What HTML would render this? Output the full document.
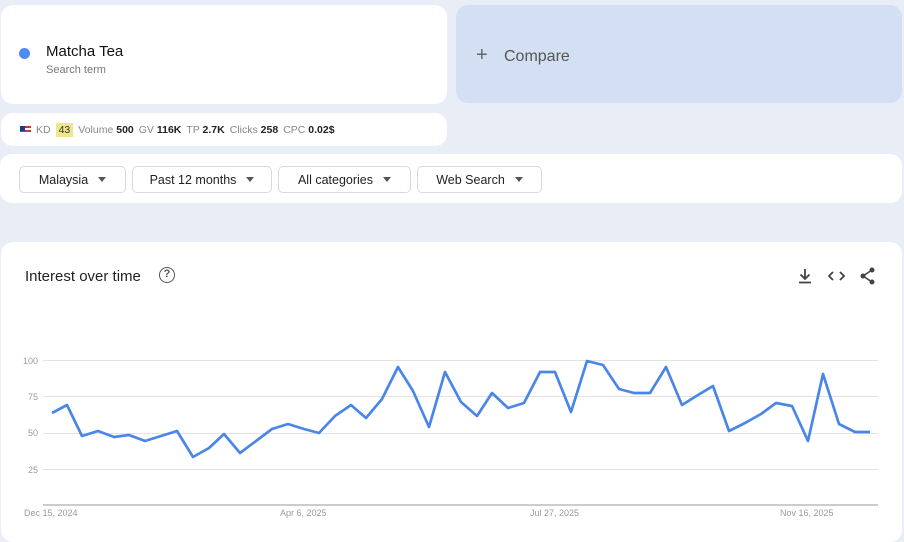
<!DOCTYPE html>
<html><head><meta charset="utf-8"><style>
*{box-sizing:border-box;margin:0;padding:0}
body{width:904px;height:528px;overflow:hidden;background:#e9eef6;font-family:"Liberation Sans",Arial,sans-serif;position:relative}
.card{position:absolute;background:#fff;border-radius:12px}
.dd{position:absolute;top:12px;height:27px;border:1px solid #d6d9de;border-radius:5px;font-size:12.5px;color:#222;display:flex;align-items:center;justify-content:center;gap:10px}
.tri{width:0;height:0;border-left:4.5px solid transparent;border-right:4.5px solid transparent;border-top:5px solid #555}
.m{font-size:10.5px;color:#888}.m b{color:#222}
.ax{position:absolute;font-size:9px;color:#9a9a9a}
</style></head><body>
<div class="card" style="left:1px;top:5px;width:446px;height:99px">
 <div style="position:absolute;left:18px;top:43px;width:11px;height:11px;border-radius:50%;background:#4e8cf1"></div>
 <div style="position:absolute;left:45px;top:38px;font-size:15px;color:#111">Matcha Tea</div>
 <div style="position:absolute;left:45px;top:59px;font-size:11px;color:#777">Search term</div>
</div>
<div style="position:absolute;left:456px;top:5px;width:446px;height:98px;background:#d3e0f3;border-radius:12px">
 <div style="position:absolute;left:20px;top:40px;font-size:20px;color:#666;line-height:20px;font-weight:300">+</div>
 <div style="position:absolute;left:48px;top:43px;font-size:16px;color:#555">Compare</div>
</div>
<div class="card" style="left:1px;top:113px;width:446px;height:33px">
 <div class="m" style="position:absolute;left:19px;top:10px;white-space:nowrap;display:flex;align-items:center;gap:5px">
 <span style="display:inline-block;width:11px;height:8px;background:linear-gradient(#c33 0 25%,#fff 25% 50%,#c33 50% 75%,#fff 75%);position:relative"><span style="position:absolute;left:0;top:0;width:5px;height:5px;background:#1a3a8c"></span></span>
 <span>KD</span><span style="background:#ede88a;color:#333;padding:1px 3px">43</span><span>Volume <b>500</b></span><span>GV <b>116K</b></span><span>TP <b>2.7K</b></span><span>Clicks <b>258</b></span><span>CPC <b>0.02$</b></span></div>
</div>
<div class="card" style="left:0;top:154px;width:902px;height:49px">
 <div class="dd" style="left:19px;width:107px">Malaysia<span class="tri"></span></div>
 <div class="dd" style="left:132px;width:140px">Past 12 months<span class="tri"></span></div>
 <div class="dd" style="left:278px;width:133px">All categories<span class="tri"></span></div>
 <div class="dd" style="left:417px;width:125px">Web Search<span class="tri"></span></div>
</div>
<div class="card" style="left:1px;top:242px;width:901px;height:300px">
 <div style="position:absolute;left:24px;top:26px;font-size:15px;color:#222">Interest over time</div>
 <div style="position:absolute;left:158px;top:25px;width:16px;height:16px;border:1.6px solid #555;border-radius:50%;font-size:11px;color:#555;text-align:center;line-height:13px;font-weight:bold">?</div>
</div>
<svg width="904" height="528" style="position:absolute;left:0;top:0">
 <g stroke="#444" stroke-width="1.8" fill="none">
  <path d="M805 269v10M800.5 274.5l4.5 4.5 4.5-4.5M799 282.5h12"/>
  <path d="M833 272l-4 4 4 4M840 272l4 4-4 4"/>
 </g>
 <g fill="#444"><circle cx="872" cy="270" r="2.5"/><circle cx="863" cy="276" r="2.5"/><circle cx="872" cy="282" r="2.5"/></g>
 <path d="M872 270l-9 6 9 6" stroke="#444" stroke-width="1.5" fill="none"/>
 <g stroke="#e3e3e3" stroke-width="1"><path d="M43 360.5H878M43 396.5H878M43 433.5H878M43 469.5H878"/></g>
 <path d="M43 505H878" stroke="#bbb" stroke-width="1.5"/>
 <polyline fill="none" stroke="#4a86e8" stroke-width="2.7" stroke-linejoin="round" points="52,413 67,405 82,436 98,431 114,437 129,435 145,441 161,436 177,431 193,457 209,448 224,434 240,453 256,441 272,429 288,424 304,429 319,433 335,416 351,405 366,418 382,399 398,367 413,391 429,427 445,372 461,402 477,416 492,393 508,408 524,403 540,372 555,372 571,412 587,361 603,365 619,389 634,393 650,393 666,367 682,405 698,395 713,386 729,431 745,423 761,414 776,403 792,406 808,441 823,374 839,424 855,432 870,432"/>
</svg>
<div class="ax" style="left:23px;top:356px">100</div>
<div class="ax" style="left:28px;top:392px">75</div>
<div class="ax" style="left:28px;top:428px">50</div>
<div class="ax" style="left:28px;top:465px">25</div>
<div class="ax" style="left:24px;top:508px">Dec 15, 2024</div>
<div class="ax" style="left:280px;top:508px">Apr 6, 2025</div>
<div class="ax" style="left:530px;top:508px">Jul 27, 2025</div>
<div class="ax" style="left:780px;top:508px">Nov 16, 2025</div>
</body></html>
